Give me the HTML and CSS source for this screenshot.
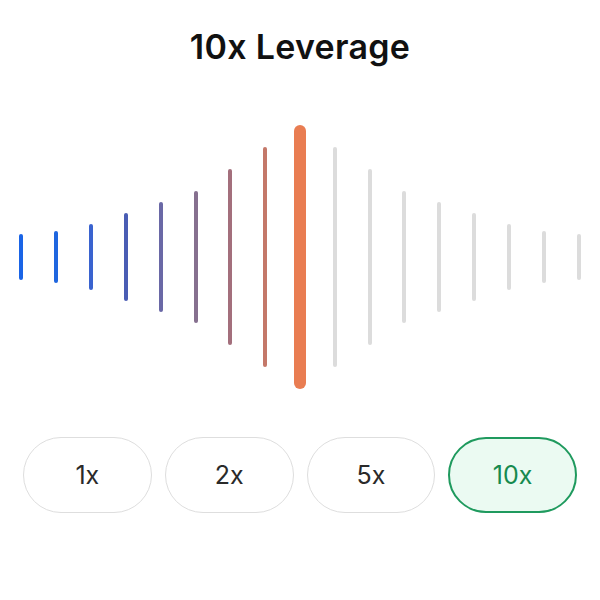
FILE: index.html
```html
<!DOCTYPE html>
<html lang="en">
<head>
    <meta charset="UTF-8">
    <meta name="viewport" content="width=device-width, initial-scale=1.0">
    <title>10x Leverage</title>
    <link rel="stylesheet" href="styles.css">
</head>
<body>
    <div class="leverage">
        <h1 class="leverage-title">10x Leverage</h1>

        <div class="wave">
            <span class="bar c1" style="height: 46px"></span>
            <span class="bar c2" style="height: 52px"></span>
            <span class="bar c3" style="height: 66px"></span>
            <span class="bar c4" style="height: 88px"></span>
            <span class="bar c5" style="height: 110px"></span>
            <span class="bar c6" style="height: 132px"></span>
            <span class="bar c7" style="height: 176px"></span>
            <span class="bar c8" style="height: 220px"></span>
            <span class="bar bar-active" style="height: 264px"></span>
            <span class="bar off" style="height: 220px"></span>
            <span class="bar off" style="height: 176px"></span>
            <span class="bar off" style="height: 132px"></span>
            <span class="bar off" style="height: 110px"></span>
            <span class="bar off" style="height: 88px"></span>
            <span class="bar off" style="height: 66px"></span>
            <span class="bar off" style="height: 52px"></span>
            <span class="bar off" style="height: 46px"></span>
        </div>

        <div class="options">
            <button class="option">1x</button>
            <button class="option">2x</button>
            <button class="option">5x</button>
            <button class="option selected">10x</button>
        </div>
    </div>
</body>
</html>
```

FILE: styles.css
```css
* {
    margin: 0;
    padding: 0;
    box-sizing: border-box;
}

body {
    background-color: #ffffff;
    font-family: 'Inter', 'Noto Sans', sans-serif;
    color: #111111;
}

.leverage {
    width: 600px;
    height: 600px;
    padding-top: 27px;
    display: flex;
    flex-direction: column;
    align-items: center;
}

.leverage-title {
    font-size: 34px;
    line-height: 40px;
    font-weight: 600;
    letter-spacing: 0.3px;
}

.wave {
    margin-top: 58px;
    width: 592px;
    height: 264px;
    display: grid;
    grid-template-columns: repeat(17, 1fr);
    align-items: center;
    justify-items: center;
}

.bar {
    display: block;
    width: 4px;
    border-radius: 2px;
}

.bar-active {
    width: 12px;
    border-radius: 6px;
    background-color: #e97d52;
}

.c1 { background-color: #1a64e6; }
.c2 { background-color: #1f66df; }
.c3 { background-color: #3a63cf; }
.c4 { background-color: #4a5db4; }
.c5 { background-color: #6a68a6; }
.c6 { background-color: #86708f; }
.c7 { background-color: #a36f7c; }
.c8 { background-color: #c47869; }
.off { background-color: #dcdcdc; }

.options {
    margin-top: 48px;
    width: 554px;
    display: grid;
    grid-template-columns: repeat(4, 1fr);
    gap: 13px;
}

.option {
    height: 76px;
    border: 1.5px solid #dedede;
    border-radius: 38px;
    background-color: #ffffff;
    font-family: 'Inter', 'Noto Sans', sans-serif;
    font-size: 25px;
    font-weight: 400;
    color: #2a2a2a;
    cursor: pointer;
}

.option.selected {
    border: 2px solid #1f9a5e;
    background-color: #ebfaf2;
    color: #168a4f;
}
```
